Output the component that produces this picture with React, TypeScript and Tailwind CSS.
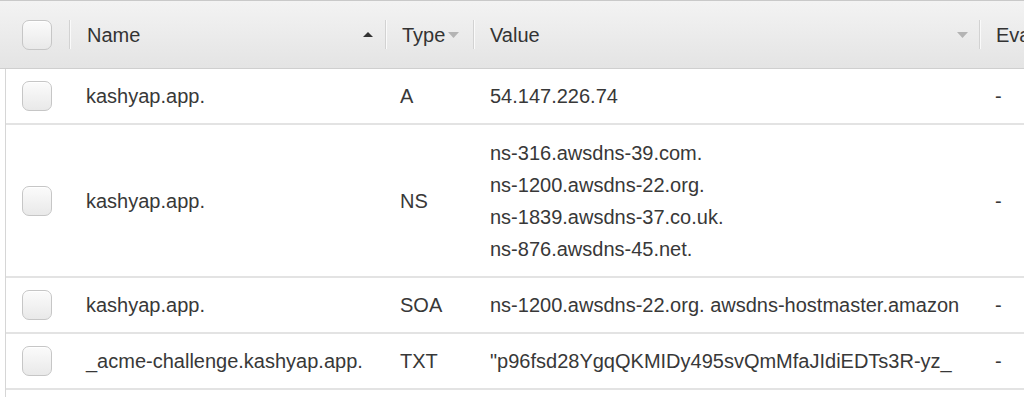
import React from "react";

const Checkbox = () => (
  <div className="w-[30px] h-[30px] rounded-[7px] border border-[#c6c6c6] bg-gradient-to-b from-[#fbfbfb] to-[#e9e9e9] shadow-[inset_0_1px_0_#fff]" />
);

const Sep = () => (
  <div className="flex h-[29px] shrink-0">
    <div className="w-px h-full bg-[#d2d2d2]" />
    <div className="w-px h-full bg-[#fafafa]" />
  </div>
);

const Row = ({
  name,
  type,
  value,
  tall,
}: {
  name: string;
  type: string;
  value: string[];
  tall?: boolean;
}) => (
  <div
    className={`grid grid-cols-[64px_316px_88px_506px_1fr] items-center border-b-2 border-[#e3e3e3] ${
      tall ? "h-[153px]" : "h-[56px]"
    }`}
  >
    <div className="pl-[16px] flex items-center">
      <Checkbox />
    </div>
    <div className="pl-[16px] whitespace-nowrap">{name}</div>
    <div className="pl-[14px] whitespace-nowrap">{type}</div>
    <div className="pl-[16px] pr-[16px] overflow-hidden whitespace-nowrap leading-[32px]">
      {value.map((v, i) => (
        <div key={i} className="overflow-hidden">
          {v}
        </div>
      ))}
    </div>
    <div className="pl-[15px] whitespace-nowrap">-</div>
  </div>
);

export default function App() {
  return (
    <div
      className="w-[1024px] h-[397px] overflow-hidden bg-white text-[20px] text-[#383838]"
      style={{ fontFamily: '"Liberation Sans", Arial, Helvetica, sans-serif' }}
    >
      {/* Header */}
      <div className="h-[69px] border-t border-b border-t-[#c9c9c9] border-b-[#cfcfcf] bg-gradient-to-b from-[#f3f3f3] to-[#e4e4e4] grid grid-cols-[69px_316px_88px_506px_1fr] items-center text-[#333]">
        <div className="pl-[22px] flex items-center">
          <Checkbox />
        </div>
        <div className="flex items-center">
          <Sep />
          <span className="ml-[16px]">Name</span>
          <svg className="ml-auto mr-[12px]" width="10" height="5" viewBox="0 0 10 5">
            <polygon points="0,5 10,5 5,0" fill="#333" />
          </svg>
        </div>
        <div className="flex items-center">
          <Sep />
          <span className="ml-[15px]">Type</span>
          <svg className="ml-[3px]" width="11" height="6" viewBox="0 0 11 6">
            <polygon points="0,0 11,0 5.5,6" fill="#b4b4b4" />
          </svg>
        </div>
        <div className="flex items-center">
          <Sep />
          <span className="ml-[15px]">Value</span>
          <svg className="ml-auto mr-[11px]" width="11" height="6" viewBox="0 0 11 6">
            <polygon points="0,0 11,0 5.5,6" fill="#b4b4b4" />
          </svg>
        </div>
        <div className="flex items-center whitespace-nowrap overflow-hidden">
          <Sep />
          <span className="ml-[15px]">Evaluate Target Health</span>
        </div>
      </div>

      {/* Body */}
      <div className="ml-[5px] border-l border-[#d6d6d6]">
        <Row name="kashyap.app." type="A" value={["54.147.226.74"]} />
        <Row
          name="kashyap.app."
          type="NS"
          tall
          value={[
            "ns-316.awsdns-39.com.",
            "ns-1200.awsdns-22.org.",
            "ns-1839.awsdns-37.co.uk.",
            "ns-876.awsdns-45.net.",
          ]}
        />
        <Row
          name="kashyap.app."
          type="SOA"
          value={["ns-1200.awsdns-22.org. awsdns-hostmaster.amazon"]}
        />
        <Row
          name="_acme-challenge.kashyap.app."
          type="TXT"
          value={['"p96fsd28YgqQKMIDy495svQmMfaJIdiEDTs3R-yz_']}
        />
        <div className="h-[20px]" />
      </div>
    </div>
  );
}
